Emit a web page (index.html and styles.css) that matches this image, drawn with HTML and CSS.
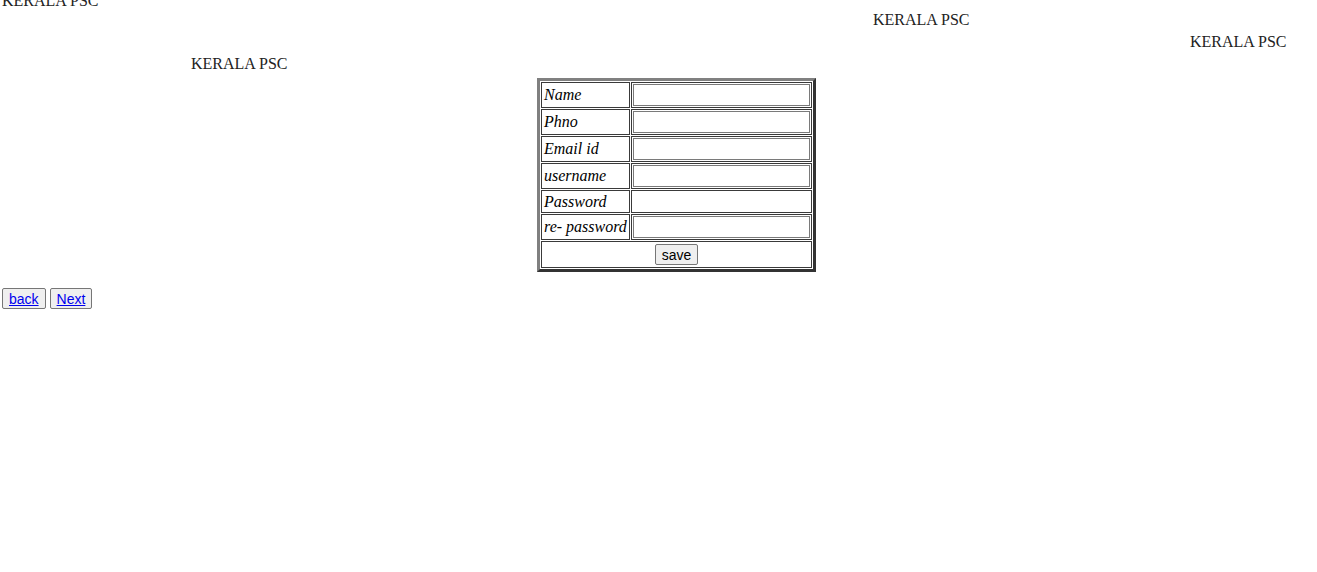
FILE: index.html
```html
<!DOCTYPE html>
<html>
<head>
<meta charset="utf-8">
<title>KERALA PSC</title>
<link rel="stylesheet" href="styles.css">
</head>
<body>
<div class="banner">
  <div class="line line-1">KERALA PSC</div>
  <div class="line line-2">KERALA PSC</div>
  <div class="line line-3">KERALA PSC</div>
  <div class="line line-4">KERALA PSC</div>
</div>
<form class="reg-form">
  <table class="reg-table">
    <tr><td class="label">Name</td><td class="field"><input class="txt" type="text"></td></tr>
    <tr><td class="label">Phno</td><td class="field"><input class="txt" type="text"></td></tr>
    <tr><td class="label">Email id</td><td class="field"><input class="txt" type="text"></td></tr>
    <tr><td class="label">username</td><td class="field"><input class="txt" type="text"></td></tr>
    <tr class="short"><td class="label">Password</td><td class="field"><input class="txt plain" type="password"></td></tr>
    <tr><td class="label">re- password</td><td class="field"><input class="txt" type="password"></td></tr>
    <tr><td class="save-cell" colspan="2"><button class="btn" type="button">save</button></td></tr>
  </table>
</form>
<div class="nav">
  <button class="btn" type="button"><a href="#">back</a></button>
  <button class="btn" type="button"><a href="#">Next</a></button>
</div>
</body>
</html>
```
FILE: styles.css
```css
html, body {
  margin: 0;
  padding: 0;
  background: #fff;
}
body {
  font-family: "Liberation Serif", "Times New Roman", serif;
  font-size: 16px;
  color: #222;
}
.banner {
  display: flex;
  flex-direction: column;
}
.line {
  height: 22px;
  line-height: 22px;
  white-space: nowrap;
}
.line-1 {
  margin-top: -10px;
  height: 19px;
  padding-left: 2px;
}
.line-2 { padding-left: 873px; }
.line-3 { padding-left: 1190px; }
.line-4 { padding-left: 191px; }

.reg-form {
  margin: 3px 0 0 537px;
}
.reg-table {
  border-width: 3px;
  border-style: solid;
  border-color: #808080 #333 #333 #808080;
  border-spacing: 1px;
  border-collapse: separate;
}
.reg-table td {
  border: 1px solid #3a3a3a;
  padding: 1px;
  font-style: italic;
  color: #000;
  line-height: 18px;
  vertical-align: middle;
}
.reg-table td.label {
  width: 85px;
  height: 22px;
  padding-left: 2px;
  padding-right: 0;
  white-space: nowrap;
}
.reg-table tr.short td.label {
  height: 19px;
}
.reg-table td.field {
  width: 177px;
}
.txt {
  display: block;
  box-sizing: border-box;
  width: 177px;
  height: 22px;
  border: 1px solid #7a7a7a;
  padding: 1px 2px;
  font-family: "Liberation Sans", Arial, sans-serif;
  font-size: 13px;
  margin: 0;
  background: #fff;
}
.txt.plain {
  border: none;
  height: 19px;
}
.reg-table td.save-cell {
  text-align: center;
  height: 23px;
}
.btn {
  font-family: "Liberation Sans", Arial, sans-serif;
  font-size: 14px;
  line-height: 16px;
  background: #efefef;
  border: 1px solid #767676;
  border-radius: 2px;
  padding: 1px 6px;
  height: 21px;
  color: #000;
  margin: 0;
}
.btn a {
  color: #0000ee;
  text-decoration: underline;
}
.nav {
  margin: 16px 0 0 2px;
  display: flex;
  gap: 4px;
}
```
